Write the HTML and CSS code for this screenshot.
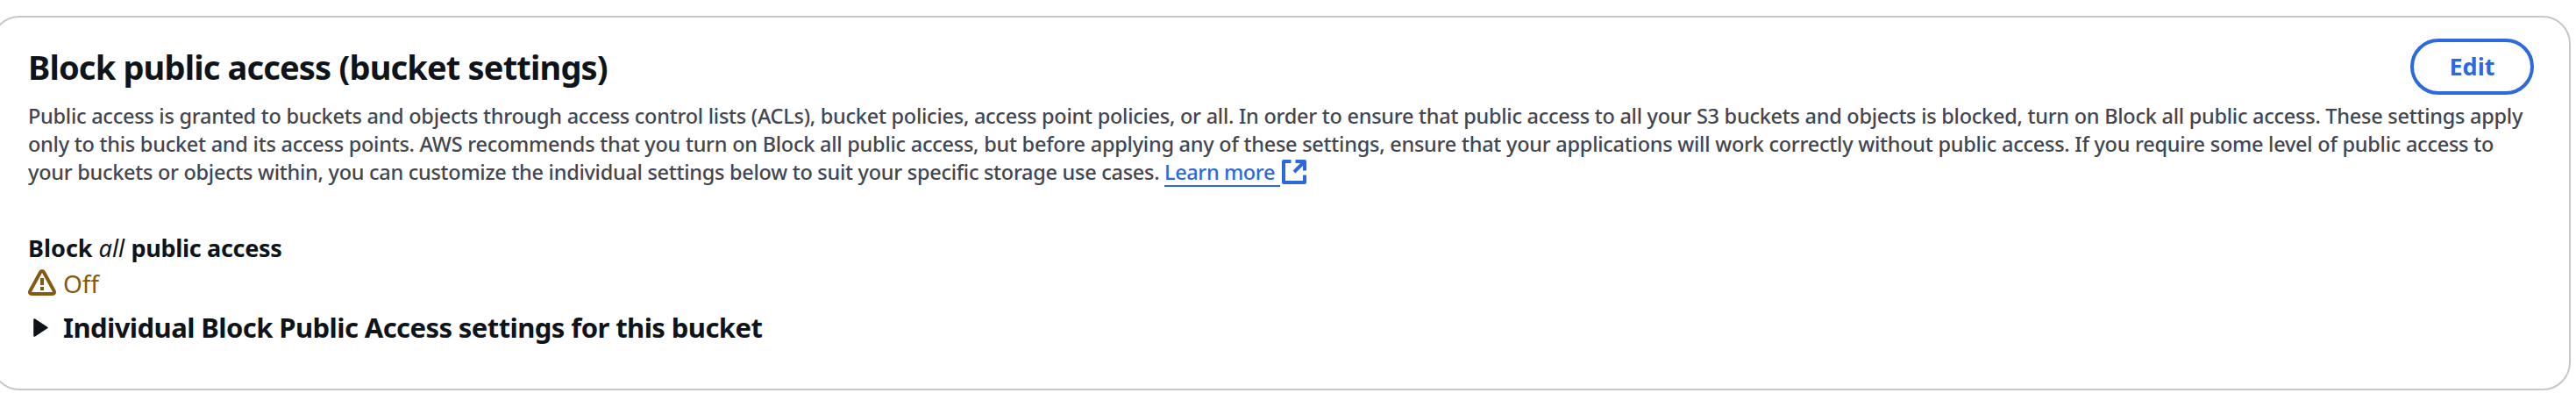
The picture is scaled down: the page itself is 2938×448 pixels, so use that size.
FILE: index.html
```html
<!DOCTYPE html>
<html lang="en">
<head>
<meta charset="utf-8">
<title>Block public access</title>
<link rel="stylesheet" href="styles.css">
</head>
<body>
<section class="card">
  <header class="header">
    <h2 class="title">Block public access (bucket settings)</h2>
    <button class="edit" type="button">Edit</button>
  </header>
  <p class="description">
    <span class="line line-1">Public access is granted to buckets and objects through access control lists (ACLs), bucket policies, access point policies, or all. In order to ensure that public access to all your S3 buckets and objects is blocked, turn on Block all public access. These settings apply</span>
    <span class="line line-2">only to this bucket and its access points. AWS recommends that you turn on Block all public access, but before applying any of these settings, ensure that your applications will work correctly without public access. If you require some level of public access to</span>
    <span class="line line-3"><span class="tail">your buckets or objects within, you can customize the individual settings below to suit your specific storage use cases. </span><a class="learn" href="#">Learn more</a><svg class="external" viewBox="0 0 28 28" aria-hidden="true"><path d="M10.5 2H2v24h24v-8.5M15.5 2H26v10.5M25.5 2.5L14 14" fill="none" stroke="currentColor" stroke-width="4" stroke-linejoin="round"/></svg></span>
  </p>
  <h3 class="label"><span>Block </span><em>all</em><span class="label-end"> public access</span></h3>
  <div class="status">
    <svg class="warning" viewBox="0 0 32 30" aria-hidden="true"><path d="M14.1 3.2 2.5 24.4Q.9 28 4.5 28h23q3.6 0 2-3.6L17.9 3.2Q16 .8 14.1 3.2Z" fill="none" stroke="currentColor" stroke-width="4" stroke-linejoin="round"/><path d="M16 10v8M16 20v4" fill="none" stroke="currentColor" stroke-width="4"/></svg>
    <span>Off</span>
  </div>
  <div class="expander">
    <svg class="caret" viewBox="0 0 17 21" aria-hidden="true"><path d="M1.2 1.2v18.6L15.6 10.5Z" fill="currentColor" stroke="currentColor" stroke-width="2" stroke-linejoin="round"/></svg>
    <h3 class="expander-title">Individual Block Public Access settings for this bucket</h3>
  </div>
</section>
</body>
</html>
```
FILE: styles.css
```css
* { box-sizing: border-box; }
body {
  margin: 0;
  height: 448px;
  overflow: hidden;
  background: #fff;
  color: #0f141a;
  font-family: "Noto Sans", "Open Sans", sans-serif;
}
h2, h3, p { margin: 0; }
.card {
  width: 2942px;
  height: 427px;
  margin: 18px 0 0 -10px;
  padding: 24px 40px 0;
  border: 2px solid #c6c6cd;
  border-radius: 32px;
}
.header {
  display: flex;
  justify-content: space-between;
  height: 64px;
}
.title {
  padding-top: 8px;
  font-size: 38px;
  font-weight: 700;
  line-height: 48px;
  letter-spacing: -0.83px;
}
.edit {
  width: 141px;
  height: 64px;
  padding: 0;
  border: 4px solid #2b69dd;
  border-radius: 32px;
  background: #fff;
  color: #2b69dd;
  font: 700 27px/56px "Noto Sans", "Open Sans", sans-serif;
}
.description {
  margin-top: 8px;
  color: #424650;
  font-size: 23.5px;
  font-weight: 500;
  line-height: 32px;
}
.line {
  display: flex;
  height: 32px;
  white-space: pre;
}
.line-1 { letter-spacing: -0.257px; }
.line-2 { letter-spacing: -0.247px; }
.tail { width: 1296px; letter-spacing: -0.279px; }
.learn {
  width: 132px;
  height: 33px;
  border-bottom: 2px solid #2b69dd;
  color: #2b69dd;
  text-decoration: none;
  letter-spacing: -0.38px;
}
.external {
  width: 28px;
  height: 28px;
  margin: 2px 0 0 2px;
  color: #2b69dd;
}
.label {
  margin-top: 53px;
  font-size: 27px;
  font-weight: 700;
  line-height: 36px;
  white-space: pre;
}
.label em { font-weight: 400; }
.label-end { margin-left: 1px; letter-spacing: -0.32px; }
.status {
  display: flex;
  align-items: center;
  gap: 8px;
  height: 44px;
  color: #855912;
  font-size: 28px;
  line-height: 44px;
}
.warning { width: 32px; height: 30px; margin-bottom: 2px; }
.expander {
  display: flex;
  align-items: center;
  gap: 17px;
  height: 40px;
  margin-top: 8px;
  padding-left: 6px;
}
.caret { width: 17px; height: 21px; }
.expander-title {
  font-size: 31px;
  font-weight: 700;
  line-height: 40px;
  letter-spacing: -0.58px;
}
```
